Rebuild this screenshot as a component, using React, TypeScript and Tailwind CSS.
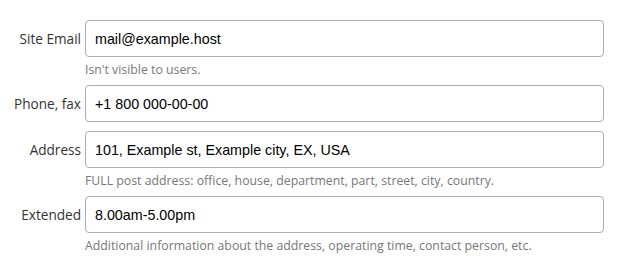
const fields = [
  { label: "Site Email", value: "mail@example.host", help: "Isn't visible to users." },
  { label: "Phone, fax", value: "+1 800 000-00-00", help: "" },
  { label: "Address", value: "101, Example st, Example city, EX, USA", help: "FULL post address: office, house, department, part, street, city, country." },
  { label: "Extended", value: "8.00am-5.00pm", help: "Additional information about the address, operating time, contact person, etc." },
];

export default function App() {
  return (
    <div className="w-[625px] h-[270px] bg-white pt-[20px] pr-[21px] font-['Open_Sans',sans-serif]">
      {fields.map((f) => (
        <div key={f.label} className={`flex gap-[4px] ${f.help ? "mb-[6px]" : "mb-[9px]"}`}>
          <div className="w-[81px] h-[37px] flex items-center justify-end pt-[1px] text-[13.6px] text-[#333] whitespace-nowrap">
            {f.label}
          </div>
          <div className="flex-1">
            <input
              readOnly
              value={f.value}
              className="block w-full h-[37px] px-[9px] border border-[#adadad] rounded-[4px] bg-white text-black text-[14.3px] font-['Liberation_Sans',Arial,sans-serif] outline-none"
            />
            {f.help && (
              <div className="pt-[4px] leading-[18px] text-[12.3px] text-[#777]">{f.help}</div>
            )}
          </div>
        </div>
      ))}
    </div>
  );
}
